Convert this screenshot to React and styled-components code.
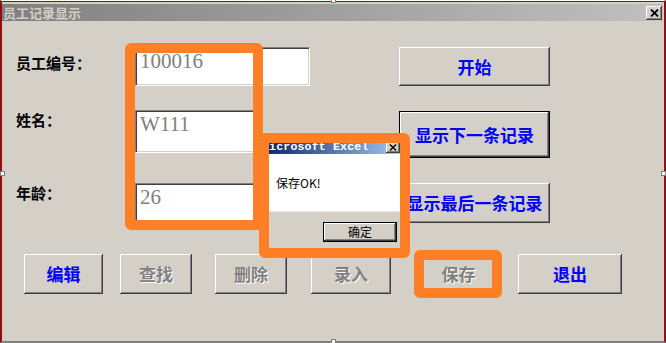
import React from 'react';
import styled, { createGlobalStyle } from 'styled-components';

const cjk = `"Noto Sans CJK SC", "Liberation Sans", sans-serif`;

const Global = createGlobalStyle`
  html, body { margin: 0; padding: 0; background: #d4d0c8; }
  body { width: 666px; height: 343px; overflow: hidden; font-family: ${cjk}; }
`;

const Frame = styled.div`
  position: relative;
  box-sizing: border-box;
  width: 666px;
  height: 343px;
  background: #d4d0c8;
  border-top: 1px solid #ffffff;
  border-left: 2px solid #8a1212;
  border-right: 2px solid #8a1212;
  border-bottom: 2px solid #808080;
  display: flex;
  flex-direction: column;
`;

const TopLine = styled.div`
  height: 1px;
  background: #8a1212;
`;

const TitleBar = styled.div`
  margin: 2px 1px 0 0;
  height: 17px;
  background: linear-gradient(to right, #808080, #c0c0c0);
  display: flex;
  align-items: center;
  justify-content: space-between;
  padding-left: 1px;
`;

const TitleText = styled.span`
  font: 700 13px/17px ${cjk};
  color: #d4d0c8;
`;

const raised = `
  background: #d4d0c8;
  box-shadow: inset -1px -1px #404040, inset 1px 1px #ffffff,
    inset -2px -2px #808080, inset 2px 2px #d4d0c8;
`;

const CloseBtn = styled.div`
  ${raised}
  width: 16px;
  height: 14px;
  margin-right: 1px;
  display: flex;
  align-items: center;
  justify-content: center;
`;

const Body = styled.div`
  flex: 1;
  padding: 26px 0 0 14px;
`;

const Fields = styled.div`
  display: grid;
  grid-template-columns: 119px 264px 151px;
  grid-template-rows: 63px 73px 71px;
  align-items: start;
`;

const Label = styled.div`
  margin-top: ${(p) => p.$mt || 0}px;
  font: 700 15px/20px ${cjk};
  color: #000;
`;

const TextBox = styled.div`
  box-sizing: border-box;
  width: ${(p) => p.$w}px;
  height: ${(p) => p.$h}px;
  background: #fff;
  border: 1px solid;
  border-color: #808080 #ffffff #ffffff #808080;
  box-shadow: inset 1px 1px #404040, inset -1px -1px #d4d0c8;
  padding: 2px 0 0 4px;
  font: 400 21px/22px "Liberation Serif", serif;
  color: #808080;
`;

const Button = styled.div`
  ${raised}
  box-sizing: border-box;
  width: ${(p) => p.$w}px;
  height: ${(p) => p.$h}px;
  margin-top: ${(p) => p.$mt || 0}px;
  margin-left: ${(p) => p.$ml || 0}px;
  flex: none;
  display: flex;
  align-items: center;
  justify-content: center;
  font: 700 17px/20px ${cjk};
  color: ${(p) => (p.$disabled ? '#808080' : '#0000ff')};
  text-shadow: ${(p) => (p.$disabled ? '1px 1px #ffffff' : 'none')};
  ${(p) =>
    p.$default
      ? `box-shadow: inset 0 0 0 1px #000, inset -2px -2px #404040, inset 2px 2px #ffffff,
          inset -3px -3px #808080;`
      : ''}
`;

const ButtonRow = styled.div`
  display: flex;
  margin-left: 8px;
`;

const Annotation = styled.div`
  position: absolute;
  left: ${(p) => p.$x - 2}px;
  top: ${(p) => p.$y - 1}px;
  width: ${(p) => p.$w}px;
  height: ${(p) => p.$h}px;
  box-sizing: border-box;
  border: 10px solid #ff7f27;
  border-radius: 6px;
  pointer-events: none;
`;

const Handle = styled.div`
  position: absolute;
  left: ${(p) => p.$x - 2}px;
  top: ${(p) => p.$y - 1}px;
  width: 5px;
  height: 5px;
  box-sizing: border-box;
  background: #fff;
  border: 1px solid #808080;
`;

const Dialog = styled.div`
  position: absolute;
  left: 260px;
  top: 134px;
  width: 142px;
  box-sizing: border-box;
  padding: 2px;
  background: #d4d0c8;
  box-shadow: inset -1px -1px #404040, inset 1px 1px #ffffff;
  display: flex;
  flex-direction: column;
`;

const DlgTitle = styled.div`
  height: 17px;
  box-sizing: border-box;
  background: linear-gradient(to right, #0a246a, #a6caf0);
  display: flex;
  align-items: flex-end;
  justify-content: space-between;
  padding: 0 0 1px 0;
`;

const DlgTitleText = styled.span`
  margin-left: -2px;
  font: 700 11.5px/13px "Liberation Mono", monospace;
  letter-spacing: 0.2px;
  color: #fff;
  white-space: nowrap;
`;

const DlgClose = styled.div`
  ${raised}
  width: 14px;
  height: 12px;
  margin-right: 2px;
  display: flex;
  align-items: center;
  justify-content: center;
`;

const DlgMessage = styled.div`
  height: 58px;
  box-sizing: border-box;
  background: #fff;
  padding: 22px 0 0 12px;
  font: 400 12px/14px ${cjk};
  color: #000;
  border-bottom: 1px solid #e8e8e8;
`;

const DlgFooter = styled.div`
  height: 38px;
  padding: 10px 0 0 59px;
  box-sizing: border-box;
`;

const DlgButton = styled.div`
  box-sizing: border-box;
  width: 74px;
  height: 20px;
  background: #d4d0c8;
  border: 1px solid #000;
  box-shadow: inset -1px -1px #404040, inset 1px 1px #ffffff, inset -2px -2px #808080;
  display: flex;
  align-items: center;
  justify-content: center;
  font: 400 12px/14px ${cjk};
  color: #000;
`;

const XIcon = ({ size = 9, w = 1.8 }) => (
  <svg width={size} height={size - 1} viewBox="0 0 9 8">
    <path d="M1 0.5 L8 7.5 M8 0.5 L1 7.5" stroke="#000" strokeWidth={w} fill="none" />
  </svg>
);

export default function App() {
  return (
    <>
      <Global />
      <Frame>
        <TopLine />
        <TitleBar>
          <TitleText>员工记录显示</TitleText>
          <CloseBtn>
            <XIcon />
          </CloseBtn>
        </TitleBar>
        <Body>
          <Fields>
            <Label $mt={6}>员工编号：</Label>
            <TextBox $w={175} $h={39}>100016</TextBox>
            <Button $w={151} $h={39}>开始</Button>

            <Label>姓名：</Label>
            <TextBox $w={123} $h={43}>W111</TextBox>
            <Button $w={151} $h={47} $mt={1} $default>显示下一条记录</Button>

            <Label>年龄：</Label>
            <TextBox $w={123} $h={39}>26</TextBox>
            <Button $w={151} $h={40}>显示最后一条记录</Button>
          </Fields>
          <ButtonRow>
            <Button $w={79} $h={40}>编辑</Button>
            <Button $w={72} $h={40} $ml={17} $disabled>查找</Button>
            <Button $w={72} $h={40} $ml={23} $disabled>删除</Button>
            <Button $w={80} $h={40} $ml={24} $disabled>录入</Button>
            <Button $w={77} $h={40} $ml={29} $disabled>保存</Button>
            <Button $w={104} $h={40} $ml={21}>退出</Button>
          </ButtonRow>
        </Body>

        <Annotation $x={125} $y={43} $w={138} $h={187} />

        <Dialog>
          <DlgTitle>
            <DlgTitleText>Microsoft Excel</DlgTitleText>
            <DlgClose>
              <XIcon size={8} w={1.5} />
            </DlgClose>
          </DlgTitle>
          <DlgMessage>保存OK!</DlgMessage>
          <DlgFooter>
            <DlgButton>确定</DlgButton>
          </DlgFooter>
        </Dialog>

        <Annotation $x={259} $y={133} $w={151} $h={125} />
        <Annotation $x={414} $y={250} $w={88} $h={48} />

        <Handle $x={331} $y={-2} />
        <Handle $x={0} $y={171} />
        <Handle $x={661} $y={171} />
        <Handle $x={331} $y={339} />
      </Frame>
    </>
  );
}
